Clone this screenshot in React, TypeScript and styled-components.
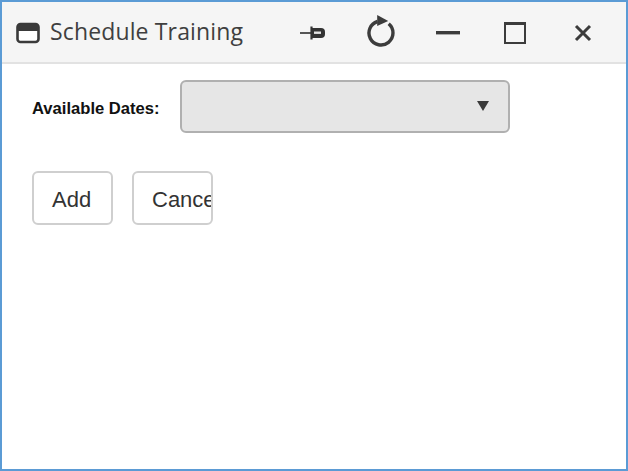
import styled, { createGlobalStyle } from 'styled-components'

const GlobalStyle = createGlobalStyle`
	html, body {
		margin: 0;
		padding: 0;
		background: #fff;
	}
`

const Window = styled.div`
	box-sizing: border-box;
	width: 628px;
	height: 471px;
	border: 2px solid #5b9bd5;
	background: #fff;
	display: flex;
	flex-direction: column;
	overflow: hidden;
`

const TitleBar = styled.header`
	box-sizing: border-box;
	height: 62px;
	flex: none;
	display: flex;
	align-items: center;
	padding: 2px 9.5px 0 14px;
	background: #f5f5f5;
	border-bottom: 2px solid #e2e2e2;
`

const Title = styled.h1`
	margin: 0 0 5px 10px;
	flex: 1;
	font-family: 'Open Sans', 'Noto Sans', sans-serif;
	font-size: 23px;
	font-weight: 400;
	letter-spacing: 0.14px;
	color: #3f3f3f;
	white-space: nowrap;
`

const Controls = styled.div`
	display: flex;
	align-items: center;
`

const ControlButton = styled.button`
	width: 67.4px;
	height: 44px;
	padding: 0;
	border: 0;
	background: transparent;
	display: flex;
	align-items: center;
	justify-content: center;
	color: #3c3c3c;
`

const Content = styled.main`
	padding: 16px 0 0 30px;
	display: flex;
	flex-direction: column;
	gap: 38px;
`

const Row = styled.div`
	display: flex;
	align-items: center;
`

const Label = styled.label`
	width: 148px;
	padding-top: 4px;
	font-family: 'Liberation Sans', Arial, sans-serif;
	font-size: 16.6px;
	font-weight: 700;
	color: #111;
	white-space: nowrap;
`

const Select = styled.div`
	box-sizing: border-box;
	width: 330px;
	height: 53px;
	padding: 0 19px 1px 0;
	display: flex;
	align-items: center;
	justify-content: flex-end;
	background: #e6e6e6;
	border: 2px solid #b0b0b0;
	border-radius: 6px;
`

const Arrow = styled.span`
	width: 0;
	height: 0;
	border-left: 6px solid transparent;
	border-right: 6px solid transparent;
	border-top: 10px solid #3a3a3a;
`

const Actions = styled.div`
	display: flex;
	gap: 19px;
`

const ActionButton = styled.button`
	box-sizing: border-box;
	width: 81px;
	height: 54px;
	padding: 4px 0 0 18px;
	overflow: hidden;
	text-align: left;
	white-space: nowrap;
	background: #fff;
	border: 2px solid #cfcfcf;
	border-radius: 6px;
	font-family: 'Liberation Sans', Arial, sans-serif;
	font-size: 22px;
	color: #333;
`

const AppIcon = () => (
	<svg width='24' height='22' viewBox='0 0 24 22'>
		<rect x='1.5' y='2' width='21' height='18' rx='3' fill='#fff' stroke='#3a3a3a' strokeWidth='2.6' />
		<path d='M1.5 5a3 3 0 0 1 3-3h15a3 3 0 0 1 3 3v4h-21z' fill='#3a3a3a' />
	</svg>
)

const PinIcon = () => (
	<svg width='26' height='16' viewBox='0 0 26 16'>
		<path d='M0 8h11' stroke='#444' strokeWidth='1.8' />
		<path d='M11.5 1.5v13' stroke='#333' strokeWidth='2.2' />
		<path d='M12 3h9a4 4 0 0 1 4 4v2a4 4 0 0 1-4 4h-9z' fill='#333' />
		<rect x='14' y='6.5' width='7' height='2.4' fill='#e4e4e4' />
	</svg>
)

const RefreshIcon = () => (
	<svg width='30' height='36' viewBox='0 0 30 36' fill='none'>
		<path d='M22.7 8.8A12 12 0 1 1 11.5 6.5' stroke='#3c3c3c' strokeWidth='3.4' />
		<path d='M11.2 0 22.2 6 11.2 11z' fill='#3c3c3c' />
	</svg>
)

const MinimizeIcon = () => (
	<svg width='24' height='4' viewBox='0 0 24 4'>
		<rect width='24' height='3.4' fill='#3c3c3c' />
	</svg>
)

const MaximizeIcon = () => (
	<svg width='22' height='22' viewBox='0 0 22 22' fill='none'>
		<rect x='1' y='1' width='20' height='20' stroke='#3c3c3c' strokeWidth='2' />
		<path d='M1 2h20' stroke='#3c3c3c' strokeWidth='2' />
	</svg>
)

const CloseIcon = () => (
	<svg width='18' height='18' viewBox='0 0 18 18'>
		<path d='M2 2l14 14M16 2 2 16' stroke='#3c3c3c' strokeWidth='3' />
	</svg>
)

const App = () => {
	return (
		<>
			<GlobalStyle />
			<Window>
				<TitleBar>
					<AppIcon />
					<Title>Schedule Training</Title>
					<Controls>
						<ControlButton aria-label='Pin'>
							<PinIcon />
						</ControlButton>
						<ControlButton aria-label='Refresh'>
							<RefreshIcon />
						</ControlButton>
						<ControlButton aria-label='Minimize'>
							<MinimizeIcon />
						</ControlButton>
						<ControlButton aria-label='Maximize'>
							<MaximizeIcon />
						</ControlButton>
						<ControlButton aria-label='Close'>
							<CloseIcon />
						</ControlButton>
					</Controls>
				</TitleBar>
				<Content>
					<Row>
						<Label>Available Dates:</Label>
						<Select>
							<Arrow />
						</Select>
					</Row>
					<Actions>
						<ActionButton>Add</ActionButton>
						<ActionButton>Cancel</ActionButton>
					</Actions>
				</Content>
			</Window>
		</>
	)
}

export default App
